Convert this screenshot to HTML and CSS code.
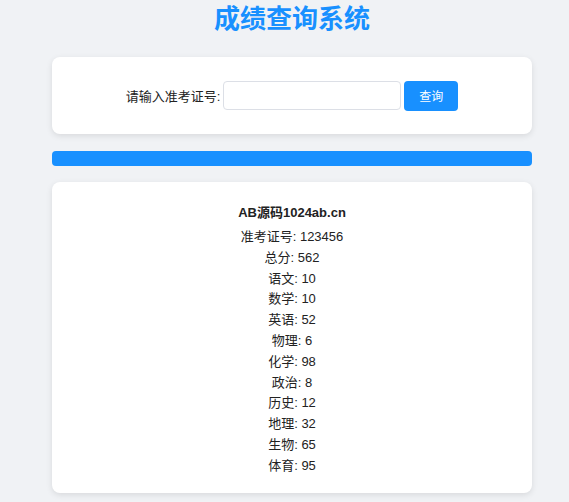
FILE: index.html
```html
<!DOCTYPE html>
<html lang="zh-CN">
<head>
<meta charset="utf-8">
<title>成绩查询系统</title>
<link rel="stylesheet" href="styles.css">
</head>
<body>
<div class="container">
  <h1 class="title">成绩查询系统</h1>
  <div class="card search-card">
    <div class="search-row">
      <label class="search-label" for="ticket">请输入准考证号:</label>
      <input class="search-input" id="ticket" type="text">
      <button class="search-btn" type="button">查询</button>
    </div>
  </div>
  <div class="bar"></div>
  <div class="card result-card">
    <div class="result-title">AB源码1024ab.cn</div>
    <ul class="result-list">
      <li>准考证号: 123456</li>
      <li>总分: 562</li>
      <li>语文: 10</li>
      <li>数学: 10</li>
      <li>英语: 52</li>
      <li>物理: 6</li>
      <li>化学: 98</li>
      <li>政治: 8</li>
      <li>历史: 12</li>
      <li>地理: 32</li>
      <li>生物: 65</li>
      <li>体育: 95</li>
    </ul>
  </div>
</div>
</body>
</html>
```
FILE: styles.css
```css
html, body {
  margin: 0;
  padding: 0;
}
body {
  background: #f0f2f5;
  font-family: "Liberation Sans", "Noto Sans CJK SC", Arial, sans-serif;
  color: #222;
  font-size: 13px;
}
.container {
  width: 480px;
  margin-left: 52px;
  padding-bottom: 20px;
}
.title {
  margin: 0;
  padding-top: 4px;
  height: 53px;
  line-height: 30px;
  font-size: 26px;
  font-weight: bold;
  color: #1890ff;
  text-align: center;
}
.card {
  background: #fff;
  border-radius: 8px;
  box-shadow: 0 2px 6px rgba(0, 0, 0, 0.1);
}
.search-card {
  height: 77px;
  display: flex;
  align-items: center;
  justify-content: center;
}
.search-row {
  display: flex;
  align-items: center;
}
.search-label {
  font-size: 13px;
  color: #222;
  margin-right: 3px;
}
.search-input {
  box-sizing: border-box;
  width: 178px;
  height: 29px;
  border: 1px solid #dcdfe6;
  border-radius: 4px;
  padding: 0 8px;
  outline: none;
  font: inherit;
}
.search-btn {
  box-sizing: border-box;
  margin-left: 3px;
  width: 54px;
  height: 30px;
  border: none;
  border-radius: 4px;
  background: #1890ff;
  color: #fff;
  font-family: inherit;
  font-size: 12px;
}
.bar {
  height: 15px;
  margin: 17px 0 16px;
  background: #1890ff;
  border-radius: 4px;
}
.result-card {
  padding: 22px 0 16px;
  text-align: center;
}
.result-title {
  font-weight: bold;
  font-size: 13px;
  line-height: 18px;
  margin-bottom: 5px;
}
.result-list {
  list-style: none;
  margin: 0;
  padding: 0;
}
.result-list li {
  line-height: 20.8px;
  font-size: 13px;
}
```
